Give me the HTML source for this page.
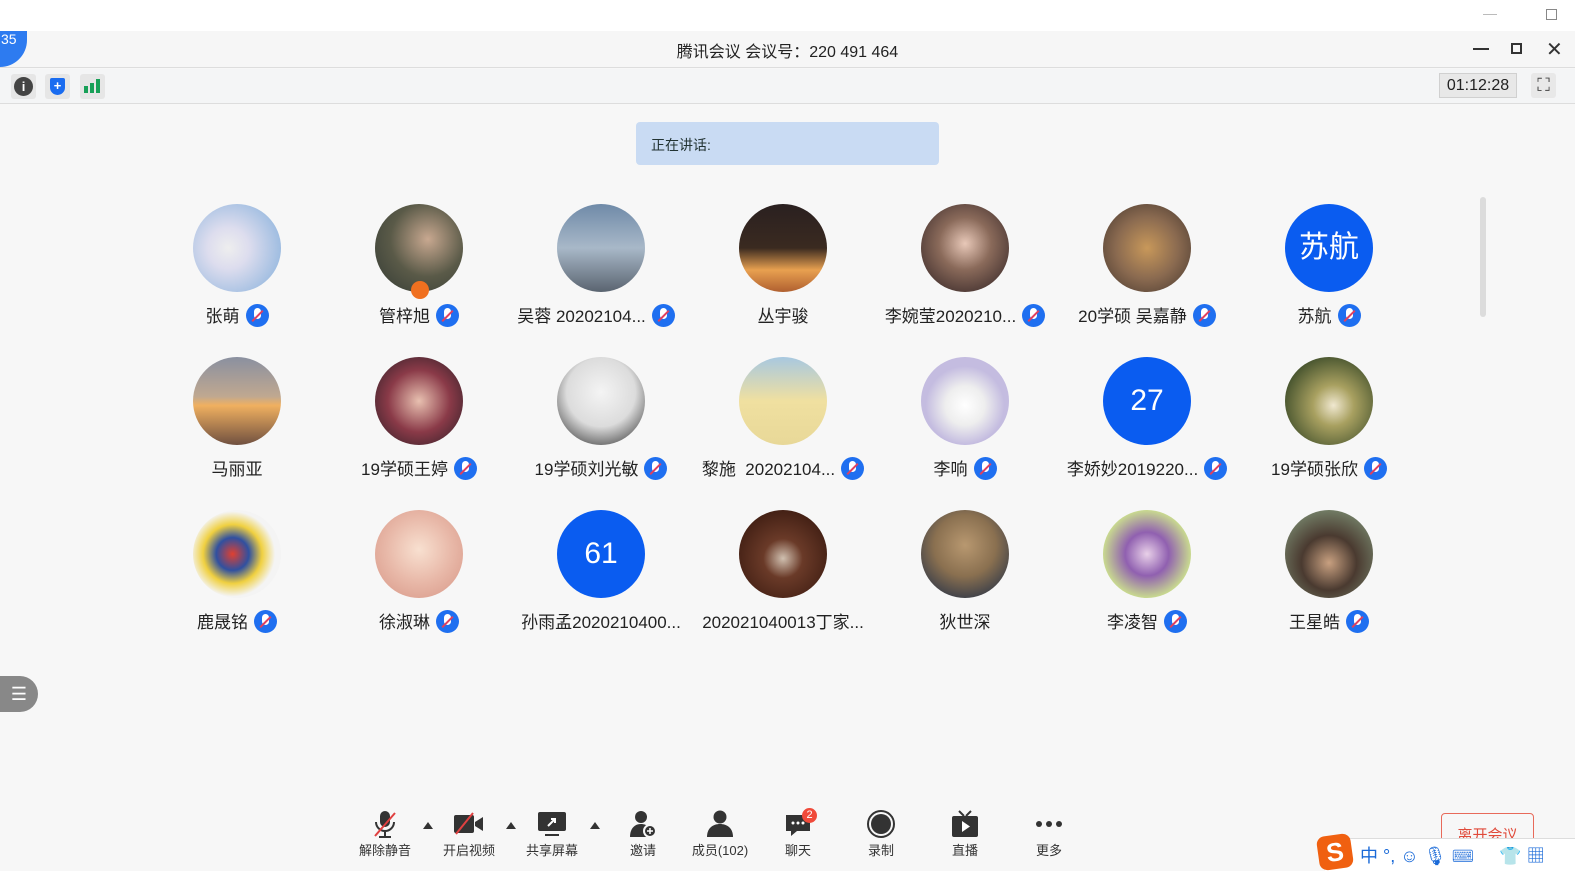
<!DOCTYPE html>
<html><head><meta charset="utf-8"><style>
*{margin:0;padding:0;box-sizing:border-box}
body{width:1575px;height:871px;overflow:hidden;background:#f7f7f7;font-family:"Liberation Sans","Noto Sans CJK SC",sans-serif;position:relative;color:#222}
.abs{position:absolute}
.av{position:absolute;width:88px;height:88px;border-radius:50%;color:#fff;font-size:30px;text-align:center;line-height:88px}
.nm{position:absolute;width:182px;text-align:center;font-size:17px;color:#222;white-space:nowrap;height:24px;line-height:24px}
.mic{display:inline-block;width:23px;height:23px;border-radius:50%;background:#1f6ff0;vertical-align:-5px;margin-left:6px;position:relative}
.mic:before{content:"";position:absolute;left:8px;top:4px;width:7px;height:11px;border-radius:4px;background:#fff}
.mic:after{content:"";position:absolute;left:4px;top:11px;width:15px;height:2px;background:#e04060;transform:rotate(-45deg)}
.tb{position:absolute;top:808px;width:80px;text-align:center;font-size:13px;color:#333}
.tb .ic{height:32px;display:flex;align-items:center;justify-content:center}
.tri{position:absolute;top:822px;width:0;height:0;border-left:5px solid transparent;border-right:5px solid transparent;border-bottom:7px solid #333}
</style></head><body>
<div class="abs" style="left:0;top:0;width:1575px;height:31px;background:#fff"></div>
<div class="abs" style="left:1483px;top:14px;width:14px;height:1px;background:#bbb"></div>
<div class="abs" style="left:1546px;top:9px;width:11px;height:11px;border:1px solid #888"></div>
<div class="abs" style="left:0;top:31px;width:1575px;height:37px;background:#f6f6f6;border-bottom:1px solid #ddd"></div>
<div class="abs" style="left:0;top:31px;width:27px;height:36px;border-radius:0 0 27px 0;background:#2d7bf0;color:#fff;font-size:14px;padding-left:1px">35</div>
<div class="abs" style="left:0;top:38px;width:1575px;text-align:center;font-size:16px;color:#222">腾讯会议 会议号：220 491 464</div>
<div class="abs" style="left:1473px;top:48px;width:16px;height:2px;background:#333"></div>
<div class="abs" style="left:1511px;top:43px;width:11px;height:11px;border:2px solid #333"></div>
<div class="abs" style="left:1546px;top:37px;font-size:20px;color:#333">✕</div>
<div class="abs" style="left:0;top:69px;width:1575px;height:35px;background:#f4f5f6;border-bottom:1px solid #ddd"></div>
<div class="abs" style="left:11px;top:74px;width:25px;height:25px;background:#e6e6e6;border-radius:3px"><div style="margin:3px;width:19px;height:19px;border-radius:50%;background:#444;color:#fff;font-size:13px;font-weight:bold;text-align:center;line-height:19px">i</div></div>
<div class="abs" style="left:45px;top:74px;width:25px;height:25px;background:#e6e6e6;border-radius:3px"><div style="margin:4px 5px;width:15px;height:17px;border-radius:2px 2px 8px 8px;background:#1a6cf0;color:#fff;font-size:13px;font-weight:bold;text-align:center;line-height:16px">+</div></div>
<div class="abs" style="left:80px;top:74px;width:25px;height:25px;background:#e6e6e6;border-radius:3px">
<div class="abs" style="left:4px;top:12px;width:4px;height:7px;background:#18a058"></div>
<div class="abs" style="left:10px;top:9px;width:4px;height:10px;background:#18a058"></div>
<div class="abs" style="left:16px;top:5px;width:4px;height:14px;background:#18a058"></div></div>
<div class="abs" style="left:1439px;top:73px;width:78px;height:25px;background:#e8e8e8;border:1px solid #d0d0d0;font-size:16px;text-align:center;line-height:23px">01:12:28</div>
<div class="abs" style="left:1531px;top:73px;width:25px;height:25px;background:#e8e8e8;border-radius:3px;color:#444;font-size:18px;text-align:center;line-height:24px">⛶</div>
<div class="abs" style="left:636px;top:122px;width:303px;height:43px;background:#c9dbf3;border-radius:4px;font-size:14px;color:#233;padding:13px 0 0 15px">正在讲话:</div>
<div class="abs" style="left:1480px;top:197px;width:6px;height:120px;background:#dcdcdc;border-radius:3px"></div>
<div class="abs" style="left:0;top:676px;width:38px;height:36px;border-radius:0 18px 18px 0;background:#888;color:#fff;font-size:18px;text-align:center;line-height:36px">☰</div>

<!-- row 1 -->
<div class="av" style="left:193px;top:204px;background:radial-gradient(circle at 40% 50%,#eee 0,#dde 30%,#9bbbe0 80%)"></div>
<div class="av" style="left:375px;top:204px;background:radial-gradient(circle at 60% 40%,#c8a890 0,#5a5a48 50%,#3a4038 90%)"></div>
<div class="abs" style="left:411px;top:281px;width:18px;height:18px;border-radius:50%;background:#f07020"></div>
<div class="av" style="left:557px;top:204px;background:linear-gradient(#6f8aa8,#a8b8c8 50%,#5a6470)"></div>
<div class="av" style="left:739px;top:204px;background:linear-gradient(#2a2020,#3a2a20 50%,#e8a050 75%,#b06030)"></div>
<div class="av" style="left:921px;top:204px;background:radial-gradient(circle at 50% 45%,#e8c8b8 0,#8a6a5a 40%,#3a2a2a 90%)"></div>
<div class="av" style="left:1103px;top:204px;background:radial-gradient(circle at 50% 50%,#c8985a 0,#8a6a50 50%,#4a3a30 95%)"></div>
<div class="av" style="left:1285px;top:204px;background:#0a5cf0">苏航</div>
<div class="nm" style="left:146px;top:304px">张萌<span class="mic"></span></div>
<div class="nm" style="left:328px;top:304px">管梓旭<span class="mic"></span></div>
<div class="nm" style="left:505px;top:304px">吴蓉 20202104...<span class="mic"></span></div>
<div class="nm" style="left:692px;top:305px">丛宇骏</div>
<div class="nm" style="left:874px;top:304px">李婉莹2020210...<span class="mic"></span></div>
<div class="nm" style="left:1056px;top:304px">20学硕 吴嘉静<span class="mic"></span></div>
<div class="nm" style="left:1238px;top:304px">苏航<span class="mic"></span></div>
<!-- row 2 -->
<div class="av" style="left:193px;top:357px;background:linear-gradient(#8a90a0,#c0a890 45%,#f0b060 55%,#705040)"></div>
<div class="av" style="left:375px;top:357px;background:radial-gradient(circle at 50% 50%,#e8c0b0 0,#8a3a48 50%,#302028 95%)"></div>
<div class="av" style="left:557px;top:357px;background:radial-gradient(circle at 50% 40%,#f4f4f4 0,#dcdcdc 50%,#303030 95%)"></div>
<div class="av" style="left:739px;top:357px;background:linear-gradient(#a8c8e0,#f0e0a0 50%,#e8d898)"></div>
<div class="av" style="left:921px;top:357px;background:radial-gradient(circle at 50% 55%,#fff 0,#eee 30%,#c4bce0 60%)"></div>
<div class="av" style="left:1103px;top:357px;background:#0a5cf0">27</div>
<div class="av" style="left:1285px;top:357px;background:radial-gradient(circle at 55% 55%,#f0e8d0 0,#a8a060 30%,#3a4a28 80%)"></div>
<div class="nm" style="left:146px;top:458px">马丽亚</div>
<div class="nm" style="left:328px;top:457px">19学硕王婷<span class="mic"></span></div>
<div class="nm" style="left:510px;top:457px">19学硕刘光敏<span class="mic"></span></div>
<div class="nm" style="left:692px;top:457px">黎施&nbsp; 20202104...<span class="mic"></span></div>
<div class="nm" style="left:874px;top:457px">李响<span class="mic"></span></div>
<div class="nm" style="left:1056px;top:457px">李娇妙2019220...<span class="mic"></span></div>
<div class="nm" style="left:1238px;top:457px">19学硕张欣<span class="mic"></span></div>
<!-- row 3 -->
<div class="av" style="left:193px;top:510px;background:radial-gradient(circle at 45% 50%,#e04030 0,#3050a0 25%,#f0d040 45%,#f4f4f4 65%)"></div>
<div class="av" style="left:375px;top:510px;background:radial-gradient(circle at 50% 45%,#f8e0d0 0,#e8b8a8 50%,#d89888 95%)"></div>
<div class="av" style="left:557px;top:510px;background:#0a5cf0">61</div>
<div class="av" style="left:739px;top:510px;background:radial-gradient(circle at 50% 55%,#d0c0b0 0,#6a3a28 30%,#3a1a10 85%)"></div>
<div class="av" style="left:921px;top:510px;background:radial-gradient(circle at 50% 40%,#b89870 0,#8a7050 45%,#303848 85%)"></div>
<div class="av" style="left:1103px;top:510px;background:radial-gradient(circle at 50% 50%,#e8d0e8 0,#9060b0 35%,#c8d890 70%)"></div>
<div class="av" style="left:1285px;top:510px;background:radial-gradient(circle at 50% 60%,#c8a080 0,#4a3a30 40%,#7a8a70 85%)"></div>
<div class="nm" style="left:146px;top:610px">鹿晟铭<span class="mic"></span></div>
<div class="nm" style="left:328px;top:610px">徐淑琳<span class="mic"></span></div>
<div class="nm" style="left:510px;top:611px">孙雨孟2020210400...</div>
<div class="nm" style="left:692px;top:611px">20202104­0013丁家...</div>
<div class="nm" style="left:874px;top:611px">狄世深</div>
<div class="nm" style="left:1056px;top:610px">李凌智<span class="mic"></span></div>
<div class="nm" style="left:1238px;top:610px">王星皓<span class="mic"></span></div>

<!-- toolbar -->
<div class="tb" style="left:345px"><div class="ic"><svg width="26" height="30"><rect x="8" y="2" width="10" height="16" rx="5" fill="#333"/><path d="M4 13a9 9 0 0 0 18 0M13 22v5M7 28h12" stroke="#333" stroke-width="2" fill="none"/><path d="M3 27L23 4" stroke="#e04040" stroke-width="2"/></svg></div>解除静音</div>
<div class="tri" style="left:423px"></div>
<div class="tb" style="left:429px"><div class="ic"><svg width="32" height="24"><rect x="1" y="3" width="20" height="18" rx="2" fill="#333"/><path d="M22 10l8-5v14l-8-5z" fill="#333"/><path d="M3 22L20 1" stroke="#e04040" stroke-width="2"/></svg></div>开启视频</div>
<div class="tri" style="left:506px"></div>
<div class="tb" style="left:512px"><div class="ic"><svg width="30" height="28"><rect x="1" y="2" width="28" height="19" rx="2" fill="#333"/><rect x="8" y="24" width="14" height="2" fill="#333"/><path d="M11 16l7-7M14 9h4v4" stroke="#fff" stroke-width="2" fill="none"/></svg></div>共享屏幕</div>
<div class="tri" style="left:590px"></div>
<div class="tb" style="left:603px"><div class="ic"><svg width="30" height="30"><circle cx="13" cy="8" r="6" fill="#333"/><path d="M2 28c0-9 5-13 11-13s11 4 11 13z" fill="#333"/><circle cx="22" cy="22" r="6" fill="#333" stroke="#f7f7f7" stroke-width="2"/><path d="M22 19v6M19 22h6" stroke="#fff" stroke-width="1.5"/></svg></div>邀请</div>
<div class="tb" style="left:680px"><div class="ic"><svg width="30" height="30"><circle cx="15" cy="8" r="6.5" fill="#333"/><path d="M2 28c0-9 6-13 13-13s13 4 13 13z" fill="#333"/></svg></div>成员(102)</div>
<div class="tb" style="left:758px"><div class="ic" style="position:relative"><svg width="30" height="30"><path d="M3 6h24v16H14l-6 5v-5H3z" fill="#333"/><circle cx="10" cy="14" r="1.5" fill="#fff"/><circle cx="15" cy="14" r="1.5" fill="#fff"/><circle cx="20" cy="14" r="1.5" fill="#fff"/></svg><div class="abs" style="left:44px;top:0;width:15px;height:15px;border-radius:50%;background:#f04a3a;color:#fff;font-size:11px;line-height:15px">2</div></div>聊天</div>
<div class="tb" style="left:841px"><div class="ic"><svg width="30" height="30"><circle cx="15" cy="15" r="13" fill="none" stroke="#333" stroke-width="2"/><circle cx="15" cy="15" r="10" fill="#333"/></svg></div>录制</div>
<div class="tb" style="left:925px"><div class="ic"><svg width="30" height="30"><path d="M9 2l5 5M21 2l-5 5" stroke="#333" stroke-width="2"/><rect x="2" y="7" width="26" height="21" rx="2" fill="#333"/><path d="M12 12v11l8-5.5z" fill="#fff"/></svg></div>直播</div>
<div class="tb" style="left:1009px"><div class="ic"><svg width="30" height="10"><circle cx="5" cy="5" r="3" fill="#333"/><circle cx="15" cy="5" r="3" fill="#333"/><circle cx="25" cy="5" r="3" fill="#333"/></svg></div>更多</div>
<div class="abs" style="left:1441px;top:813px;width:93px;height:40px;border:1px solid #e86a5a;border-radius:4px;color:#e04a3a;font-size:15px;text-align:center;padding-top:10px">离开会议</div>
<div class="abs" style="left:1325px;top:838px;width:250px;height:33px;background:#fff;border-top:1px solid #ddd;font-size:18px;color:#1a6ad8;white-space:nowrap">
<div class="abs" style="left:-7px;top:-4px;width:34px;height:34px;background:#f06010;border-radius:8px;color:#fff;font-weight:bold;font-size:26px;text-align:center;line-height:34px;transform:rotate(-8deg)">S</div>
<span class="abs" style="left:35px;top:3px">中 °, ☺ 🎙 ⌨ &nbsp;&nbsp;&nbsp; 👕 ▦</span></div>
</body></html>
